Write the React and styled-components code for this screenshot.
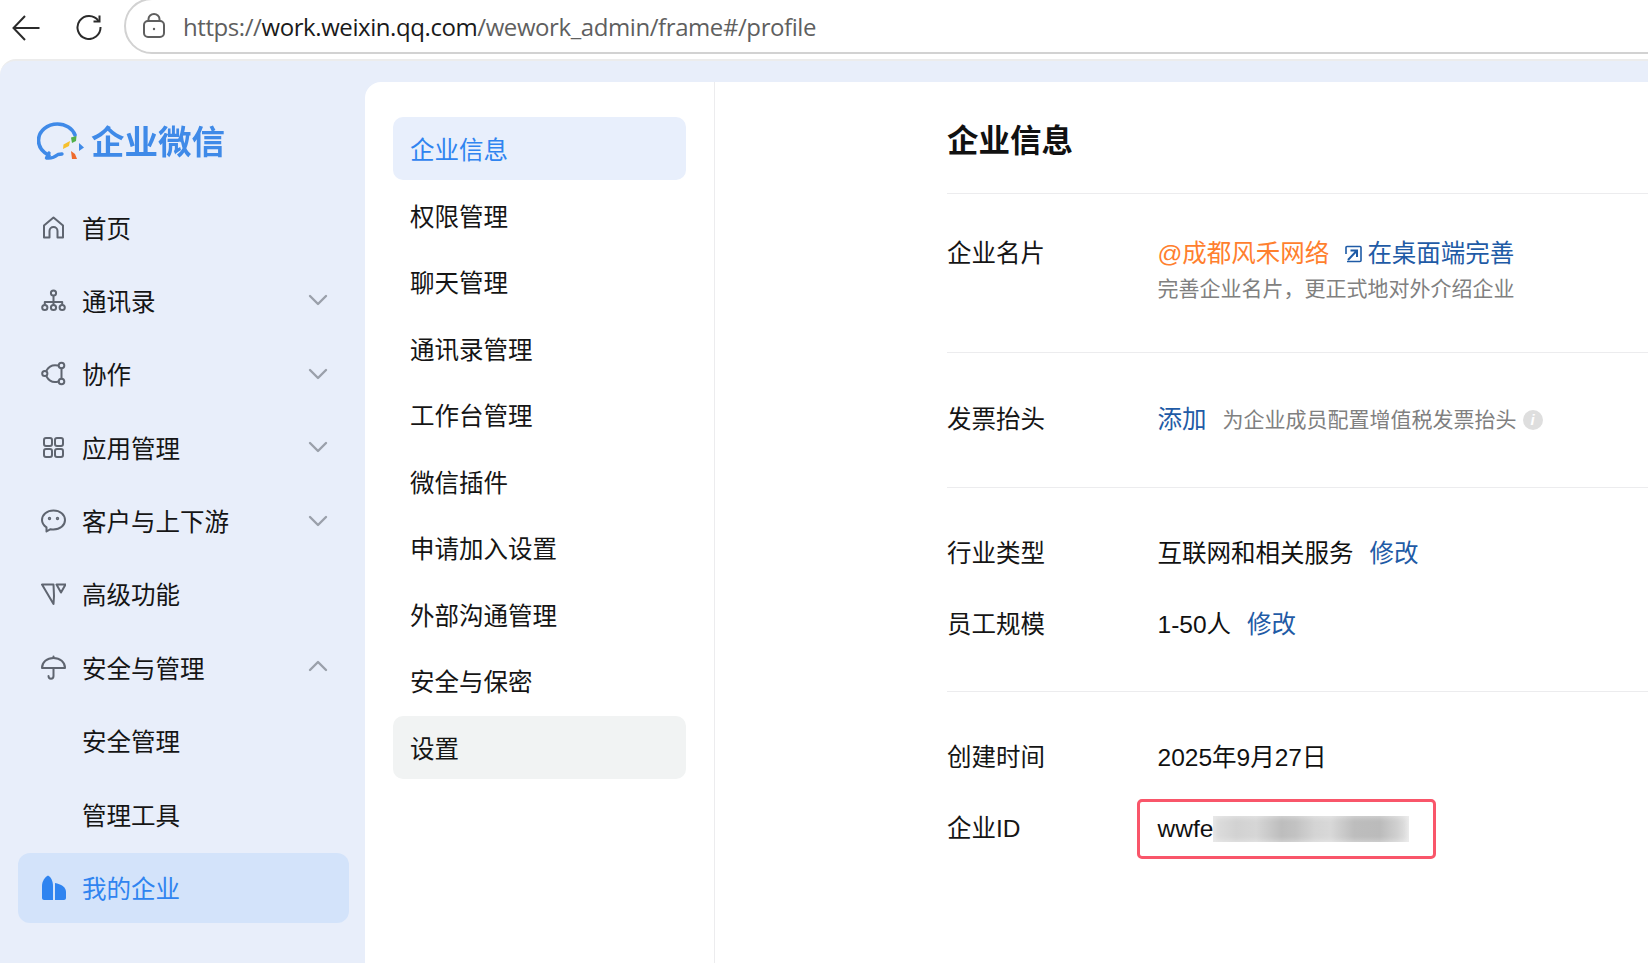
import React from "react";
import styled, { createGlobalStyle } from "styled-components";

const GlobalStyle = createGlobalStyle`
  html, body {
    margin: 0;
    height: 100%;
    background: #fff;
    overflow: hidden;
  }
  body {
    font-family: "Liberation Sans", "Noto Sans CJK SC", sans-serif;
    color: #111;
  }
`;

const Page = styled.div`
  width: 1648px;
  height: 963px;
  display: flex;
  flex-direction: column;
  overflow: hidden;
`;

const BrowserBar = styled.div`
  height: 60px;
  flex: none;
  display: flex;
  align-items: flex-start;
  padding-left: 12px;
  box-sizing: border-box;
  background: #fff;
`;

const BarIcon = styled.svg`
  flex: none;
  margin-top: ${(p) => p.$top}px;
  margin-right: ${(p) => p.$right}px;
`;

const AddressBar = styled.div`
  flex: 1;
  height: 56px;
  margin-top: -2px;
  margin-right: -40px;
  box-sizing: border-box;
  border: 2px solid #d2d2d2;
  border-radius: 28px;
  display: flex;
  align-items: center;
  padding-left: 16px;
`;

const Url = styled.div`
  margin-left: 17px;
  font-family: "Open Sans", sans-serif;
  font-size: 24px;
  letter-spacing: -0.42px;
  color: #5f5f5f;
  white-space: nowrap;
  span {
    color: #1a1a1a;
  }
`;

const Workspace = styled.div`
  flex: 1;
  min-height: 0;
  display: flex;
  background: #e8eefa;
  border-top: 2px solid #ececec;
  border-top-left-radius: 16px;
  margin-top: -1px;
  box-sizing: border-box;
`;

const Sidebar = styled.nav`
  width: 365px;
  flex: none;
  box-sizing: border-box;
  padding: 0 16px 0 18px;
`;

const Logo = styled.div`
  height: 42px;
  margin: 61px 0 28px 19px;
  display: flex;
  align-items: center;
  gap: 6px;
`;

const LogoText = styled.div`
  font-size: 33.5px;
  line-height: 42px;
  font-weight: 700;
  color: #3f8ae8;
  filter: blur(0.4px);
`;

const NavList = styled.div`
  display: flex;
  flex-direction: column;
  gap: 3.4px;
`;

const NavRow = styled.div`
  height: 70px;
  flex: none;
  display: flex;
  align-items: center;
  border-radius: 12px;
  padding: 0 21px 0 ${(p) => (p.$sub ? 64 : 23)}px;
  font-size: 24.5px;
  color: ${(p) => (p.$active ? "#2f84f0" : "#151515")};
  background: ${(p) => (p.$active ? "#d3e3fa" : "transparent")};
`;

const NavIcon = styled.svg`
  width: 25px;
  height: 25px;
  flex: none;
  margin-right: 16px;
  fill: none;
  stroke: #5f6570;
  stroke-width: 2;
  stroke-linecap: round;
  stroke-linejoin: round;
`;

const NavLabel = styled.div`
  flex: 1;
`;

const Chevron = styled.svg`
  width: 20px;
  height: 12px;
  flex: none;
  fill: none;
  stroke: #9aa0aa;
  stroke-width: 2.4;
  stroke-linecap: round;
  stroke-linejoin: round;
  transform: ${(p) => (p.$open ? "rotate(180deg) translateY(1px)" : "none")};
`;

const SubPanel = styled.div`
  width: 350px;
  flex: none;
  margin-top: 21px;
  box-sizing: border-box;
  padding: 35px 28px 0 28px;
  background: #fff;
  border-top-left-radius: 16px;
  border-right: 1px solid #ececee;
  display: flex;
  flex-direction: column;
  gap: 3.5px;
`;

const SubItem = styled.div`
  height: 63px;
  flex: none;
  display: flex;
  align-items: center;
  padding-left: 17px;
  border-radius: 10px;
  font-size: 24.5px;
  color: ${(p) => (p.$current ? "#2f84f0" : "#151515")};
  background: ${(p) =>
    p.$current ? "#e8effc" : p.$muted ? "#f1f3f3" : "transparent"};
`;

const Main = styled.main`
  flex: 1;
  margin-top: 21px;
  padding-left: 232px;
  background: #fff;
`;

const Title = styled.h1`
  height: 111px;
  margin: 0;
  display: flex;
  align-items: center;
  font-size: 31.5px;
  font-weight: 700;
  color: #111;
`;

const Section = styled.section`
  box-sizing: border-box;
  height: ${(p) => p.$height}px;
  padding-top: ${(p) => p.$top}px;
  border-top: 1px solid #ececee;
  display: flex;
  flex-direction: column;
  align-items: flex-start;
`;

const Row = styled.div`
  height: 30px;
  display: flex;
  align-items: center;
  font-size: 24.5px;
  line-height: 30px;
  white-space: nowrap;
  margin-bottom: ${(p) => p.$after || 0}px;
`;

const Label = styled.div`
  width: 210.5px;
  flex: none;
  color: #151515;
`;

const Value = styled.div`
  color: #111;
`;

const CardName = styled.span`
  color: #ff7f2e;
`;

const Link = styled.a`
  color: #1f5ba6;
  margin-left: ${(p) => p.$left || 0}px;
`;

const ExternalIcon = styled.svg`
  width: 18px;
  height: 18px;
  flex: none;
  margin: 0 5px 0 15px;
  fill: none;
  stroke: #1f5ba6;
  stroke-width: 2;
`;

const Hint = styled.div`
  font-size: 21px;
  line-height: 30px;
  color: #808080;
  margin-left: ${(p) => p.$left || 0}px;
`;

const HintLine = styled(Hint)`
  padding-left: 210.5px;
  margin-top: 5px;
`;

const InfoDot = styled.span`
  width: 20px;
  height: 20px;
  margin-left: 6px;
  border-radius: 50%;
  background: #dedede;
  display: inline-flex;
  align-items: center;
  justify-content: center;
  color: #fff;
  font-size: 15px;
  font-weight: 700;
  font-style: italic;
`;

const IdBox = styled.div`
  width: 299px;
  height: 60px;
  margin-left: -21px;
  box-sizing: border-box;
  border: 3px solid #f9566a;
  border-radius: 5px;
  padding-left: 18px;
  display: flex;
  align-items: center;
`;

const Redacted = styled.div`
  width: 202px;
  height: 26px;
  margin-left: auto;
  margin-right: 24px;
  background: linear-gradient(
    90deg,
    #dedede 0%,
    #d2d2d2 12%,
    #d6d6d6 22%,
    #bdbdbd 35%,
    #c2c2c2 42%,
    #d4d4d4 52%,
    #d8d8d8 60%,
    #bdbdbd 72%,
    #bbbbbb 85%,
    #d0d0d0 94%,
    #e4e4e4 100%
  );
  box-shadow: inset 0 0 5px 2px rgba(255, 255, 255, 0.35);
`;

const BubbleLogo = () => (
  <svg width="48" height="42" viewBox="0 0 48 42" style={{ flex: "none" }}>
    <path
      d="M12 33.5 C5.5 30 1.5 25 1.5 18.5 C1.5 9 10.5 2 20.5 2 C28.5 2 35.5 6.5 38 13"
      fill="none"
      stroke="#3f8ae8"
      strokeWidth="3.6"
      strokeLinecap="round"
    />
    <path
      d="M12 31 L9.5 36 C13 36.5 18 35 21 32.5 L25 32"
      fill="none"
      stroke="#3f8ae8"
      strokeWidth="3.4"
      strokeLinecap="round"
      strokeLinejoin="round"
    />
    <path d="M35 21 L39 19 L39.5 14 L34 15.5 Z" fill="#52b04a" />
    <path d="M26 27 L32 24 L33 19 L26.5 22.5 Z" fill="#f6c02e" />
    <path d="M34 29 L38 32 L40 37 L35 37 Z" fill="#ee6a2c" />
    <path d="M42 21 L47 25.5 L42 29 Z" fill="#3f8ae8" />
  </svg>
);

const icons = {
  home: (
    <path d="M3 22.5 V10.5 L12.5 2.5 L22 10.5 V22.5 H16.5 V16 a4 4 0 0 0 -8 0 V22.5 Z" />
  ),
  contacts: (
    <>
      <circle cx="12.5" cy="5" r="2.6" />
      <circle cx="3.8" cy="19.5" r="2.6" />
      <circle cx="12.5" cy="19.5" r="2.6" />
      <circle cx="21.2" cy="19.5" r="2.6" />
      <path d="M3.8 16.5 V14 H21.2 V16.5 M12.5 8 V16.5" />
    </>
  ),
  collab: (
    <>
      <circle cx="3.8" cy="12.5" r="2.6" />
      <circle cx="20.5" cy="4.5" r="2.8" />
      <circle cx="20.5" cy="20.5" r="2.8" />
      <path d="M5.5 9.5 C8 5 12.5 3.5 17 4.5 M20.5 7.5 V17.5 M17.5 20.5 C12.5 22 8 20 5.5 15.5" />
    </>
  ),
  apps: (
    <>
      <rect x="3" y="3" width="8" height="8" rx="2" />
      <rect x="14" y="3" width="8" height="8" rx="2" />
      <rect x="3" y="14" width="8" height="8" rx="2" />
      <rect x="14" y="14" width="8" height="8" rx="2" />
    </>
  ),
  chat: (
    <>
      <path d="M12.5 2.5 C19 2.5 24 6.5 24 12 C24 17.5 19 21.5 12.5 21.5 C11.5 21.5 10.5 21.4 9.5 21.2 L5.5 23.5 L5.5 19.3 C2.8 17.5 1 15 1 12 C1 6.5 6 2.5 12.5 2.5 Z" />
      <circle cx="8.5" cy="10.5" r="0.7" />
      <circle cx="16.5" cy="10.5" r="0.7" />
    </>
  ),
  premium: (
    <>
      <path d="M1 3.5 H12.5 L13 15 L12.5 23 Z" />
      <path d="M15.5 3.5 H24.5 L20 11.5 Z" />
    </>
  ),
  umbrella: (
    <>
      <path d="M1 13 C1 7 6 3 12.5 3 C19 3 24 7 24 13 Z" />
      <path d="M12.5 1.5 V3 M12.5 13 V21 C12.5 24.5 7.5 24.5 7.5 21" />
    </>
  ),
};

const CompanyIcon = () => (
  <NavIcon viewBox="0 0 25 25" style={{ stroke: "none", fill: "#2f84f0" }}>
    <path d="M1 11 C1 6 4 2 7 0.5 C10 2 12 6 12 11 V25 H3 C2 25 1 24 1 23 Z" />
    <path d="M14 8 C20 9 25 12 25 17 V23 C25 24 24 25 23 25 H14 Z" />
  </NavIcon>
);

const navItems = [
  { label: "首页", icon: "home" },
  { label: "通讯录", icon: "contacts", chevron: true },
  { label: "协作", icon: "collab", chevron: true },
  { label: "应用管理", icon: "apps", chevron: true },
  { label: "客户与上下游", icon: "chat", chevron: true },
  { label: "高级功能", icon: "premium" },
  { label: "安全与管理", icon: "umbrella", chevron: true, open: true },
  { label: "安全管理", sub: true },
  { label: "管理工具", sub: true },
];

const subItems = [
  "企业信息",
  "权限管理",
  "聊天管理",
  "通讯录管理",
  "工作台管理",
  "微信插件",
  "申请加入设置",
  "外部沟通管理",
  "安全与保密",
  "设置",
];

function App() {
  return (
    <Page>
      <GlobalStyle />
      <BrowserBar>
        <BarIcon $top={15} $right={36} width="28" height="26" viewBox="0 0 28 26" fill="none" stroke="#2b2b2b" strokeWidth="2">
          <path d="M13 1 L1.5 13 L13 25 M1.5 13 H27.5" />
        </BarIcon>
        <BarIcon $top={14} $right={22} width="26" height="26" viewBox="0 0 26 26" fill="none" stroke="#2b2b2b" strokeWidth="2">
          <path d="M22.5 7 A11.5 11.5 0 1 0 24.5 13" />
          <path d="M23.5 1.5 V7.5 H17.5" />
        </BarIcon>
        <AddressBar>
          <svg width="24" height="26" viewBox="0 0 24 26" fill="none" stroke="#5f5f5f" strokeWidth="2" style={{ flex: "none" }}>
            <rect x="2" y="8" width="20" height="16" rx="4" />
            <path d="M6.5 8 V6 a5.5 5 0 0 1 11 0 V8" />
            <circle cx="12" cy="16" r="1.2" fill="#5f5f5f" stroke="none" />
          </svg>
          <Url>
            https://<span>work.weixin.qq.com</span>/wework_admin/frame#/profile
          </Url>
        </AddressBar>
      </BrowserBar>
      <Workspace>
        <Sidebar>
          <Logo>
            <BubbleLogo />
            <LogoText>企业微信</LogoText>
          </Logo>
          <NavList>
            {navItems.map((item) => (
              <NavRow key={item.label} $sub={item.sub}>
                {item.icon && <NavIcon viewBox="0 0 25 25">{icons[item.icon]}</NavIcon>}
                <NavLabel>{item.label}</NavLabel>
                {item.chevron && (
                  <Chevron viewBox="0 0 20 12" $open={item.open}>
                    <path d="M2 2 L10 10 L18 2" />
                  </Chevron>
                )}
              </NavRow>
            ))}
            <NavRow $active>
              <CompanyIcon />
              <NavLabel>我的企业</NavLabel>
            </NavRow>
          </NavList>
        </Sidebar>
        <SubPanel>
          {subItems.map((item, i) => (
            <SubItem key={item} $current={i === 0} $muted={item === "设置"}>
              {item}
            </SubItem>
          ))}
        </SubPanel>
        <Main>
          <Title>企业信息</Title>
          <Section $height={159} $top={45}>
            <Row>
              <Label>企业名片</Label>
              <CardName>@成都风禾网络</CardName>
              <ExternalIcon viewBox="0 0 18 18">
                <path d="M3 16.5 H16 a1 1 0 0 0 1 -1 V2.500 a1 1 0 0 0 -1 -1 H3 a1 1 0 0 0 -1 1 V9" strokeWidth="1.6" />
                <path d="M4 15 L12.500 6 M6.500 5.500 H13 V12" />
              </ExternalIcon>
              <Link>在桌面端完善</Link>
            </Row>
            <HintLine>完善企业名片，更正式地对外介绍企业</HintLine>
          </Section>
          <Section $height={135} $top={52}>
            <Row>
              <Label>发票抬头</Label>
              <Link>添加</Link>
              <Hint $left={16}>为企业成员配置增值税发票抬头</Hint>
              <InfoDot>i</InfoDot>
            </Row>
          </Section>
          <Section $height={204} $top={51}>
            <Row $after={40.6}>
              <Label>行业类型</Label>
              <Value>互联网和相关服务</Value>
              <Link $left={16}>修改</Link>
            </Row>
            <Row>
              <Label>员工规模</Label>
              <Value>1-50人</Value>
              <Link $left={16}>修改</Link>
            </Row>
          </Section>
          <Section $height={270} $top={51}>
            <Row $after={41}>
              <Label>创建时间</Label>
              <Value>2025年9月27日</Value>
            </Row>
            <Row>
              <Label>企业ID</Label>
              <IdBox>
                <Value>wwfe</Value>
                <Redacted />
              </IdBox>
            </Row>
          </Section>
        </Main>
      </Workspace>
    </Page>
  );
}

export default App;
